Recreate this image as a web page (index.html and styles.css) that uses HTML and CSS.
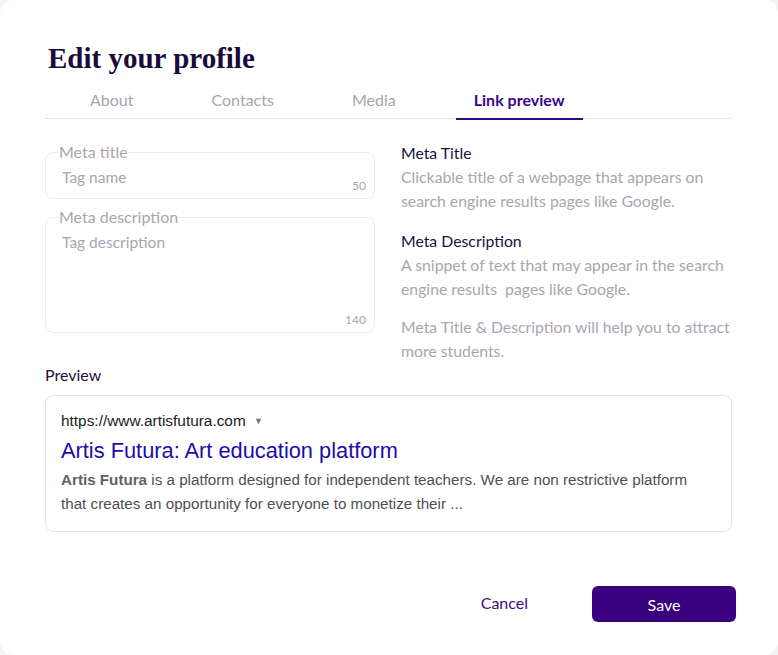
FILE: index.html
```html
<!DOCTYPE html>
<html lang="en">
<head>
    <meta charset="UTF-8">
    <meta name="viewport" content="width=device-width, initial-scale=1.0">
    <title>Edit your profile</title>
    <link rel="stylesheet" href="styles.css">
</head>
<body>

    <div class="modal">
        <h1 class="modal-title">Edit your profile</h1>

        <nav class="tabs">
            <span class="tab">About</span>
            <span class="tab">Contacts</span>
            <span class="tab">Media</span>
            <span class="tab active">Link preview</span>
        </nav>

        <div class="meta-row">
            <div class="meta-fields">
                <fieldset class="field">
                    <legend>Meta title</legend>
                    <div class="field-body">
                        <span class="placeholder">Tag name</span>
                        <span class="counter">50</span>
                    </div>
                </fieldset>

                <fieldset class="field field-area">
                    <legend>Meta description</legend>
                    <div class="field-body">
                        <span class="placeholder">Tag description</span>
                        <span class="counter">140</span>
                    </div>
                </fieldset>
            </div>

            <div class="meta-help">
                <h3>Meta Title</h3>
                <p>Clickable title of a webpage that appears on search engine results pages like Google.</p>
                <h3>Meta Description</h3>
                <p>A snippet of text that may appear in the search engine results&nbsp; pages like Google.</p>
                <p class="note">Meta Title &amp; Description will help you to attract more students.</p>
            </div>
        </div>

        <div class="preview-label">Preview</div>
        <div class="preview-card">
            <div class="preview-url">https://www.artisfutura.com <span class="caret">&#9660;</span></div>
            <div class="preview-title">Artis Futura: Art education platform</div>
            <p class="preview-desc"><b>Artis Futura</b> is a platform designed for independent teachers. We are non restrictive platform that creates an opportunity for everyone to monetize their ...</p>
        </div>

        <div class="actions">
            <button class="btn-cancel">Cancel</button>
            <button class="btn-save">Save</button>
        </div>
    </div>

</body>
</html>
```

FILE: styles.css
```css
body {
    margin: 0;
    padding: 0;
    background-color: #f4f4f5;
    font-family: Lato, 'Open Sans', sans-serif;
}

.modal {
    box-sizing: border-box;
    width: 778px;
    height: 655px;
    background-color: #fff;
    border-radius: 14px;
    padding: 40px 46px 0 45px;
}

.modal-title {
    font-family: 'Liberation Serif', serif;
    font-weight: bold;
    font-size: 29px;
    line-height: 36px;
    color: #1b0a3a;
    margin: 0 0 0 3px;
}

.tabs {
    display: flex;
    gap: 42px;
    padding-left: 27px;
    border-bottom: 1px solid #e6e4e8;
    margin-top: 8px;
}

.tab {
    font-size: 16px;
    line-height: 24px;
    color: #aaa3af;
    padding: 4px 18px 6px;
    border-bottom: 2px solid transparent;
    margin-bottom: -2px;
}

.tab.active {
    color: #36098a;
    font-weight: bold;
    border-bottom-color: #36098a;
}

.meta-row {
    display: flex;
    gap: 26px;
    margin-top: 22px;
}

.meta-fields {
    width: 330px;
    flex-shrink: 0;
    padding-top: 2px;
}

.field {
    margin: 0;
    padding: 0 8px 5px 13px;
    border: 1px solid #ececee;
    border-radius: 8px;
}

.field legend {
    padding: 0;
    font-size: 16px;
    line-height: 18px;
    color: #aca4b0;
}

.field-body {
    display: flex;
    justify-content: space-between;
    align-items: flex-end;
    height: 32px;
}

.placeholder {
    align-self: flex-start;
    padding: 6px 0 0 3px;
    font-size: 15.5px;
    line-height: 20px;
    color: #aca4b0;
}

.counter {
    font-size: 12px;
    line-height: 14px;
    color: #aca4b0;
}

.field-area {
    margin-top: 9px;
}

.field-area .field-body {
    height: 101px;
}

.meta-help {
    flex: 1;
    margin-right: -6px;
}

.meta-help h3 {
    margin: 0;
    font-size: 15.8px;
    font-weight: normal;
    line-height: 24px;
    color: #1e1140;
}

.meta-help p {
    margin: 0 0 16px;
    font-size: 15.8px;
    line-height: 24px;
    color: #aca4b0;
}

.meta-help p.note {
    margin: -2px 0 0;
}

.preview-label {
    font-size: 16px;
    line-height: 24px;
    color: #1e1140;
}

.preview-card {
    margin-top: 8px;
    border: 1px solid #e3e3e5;
    border-radius: 8px;
    padding: 14px 15px 15px;
    font-family: 'Liberation Sans', Arial, sans-serif;
}

.preview-url {
    font-size: 15.4px;
    line-height: 22px;
    color: #202124;
}

.caret {
    font-size: 9px;
    color: #70757a;
    margin-left: 4px;
    vertical-align: 2px;
}

.preview-title {
    font-size: 21.8px;
    line-height: 30px;
    color: #1a0dab;
    margin-top: 4px;
}

.preview-desc {
    margin: 2px 0 0;
    font-size: 15.2px;
    line-height: 24px;
    color: #4d5156;
}

.preview-desc b {
    color: #5f6368;
}

.actions {
    display: flex;
    justify-content: flex-end;
    align-items: center;
    gap: 64px;
    margin-top: 54px;
    margin-right: -4px;
}

.btn-cancel {
    background: none;
    border: none;
    padding: 0;
    font-family: Lato, sans-serif;
    font-size: 16px;
    color: #3a0d8a;
    cursor: pointer;
    margin-top: -3px;
}

.btn-save {
    width: 144px;
    height: 36px;
    border: none;
    border-radius: 6px;
    background-color: #390080;
    color: #fff;
    font-family: Lato, sans-serif;
    font-size: 16px;
    cursor: pointer;
}
```
